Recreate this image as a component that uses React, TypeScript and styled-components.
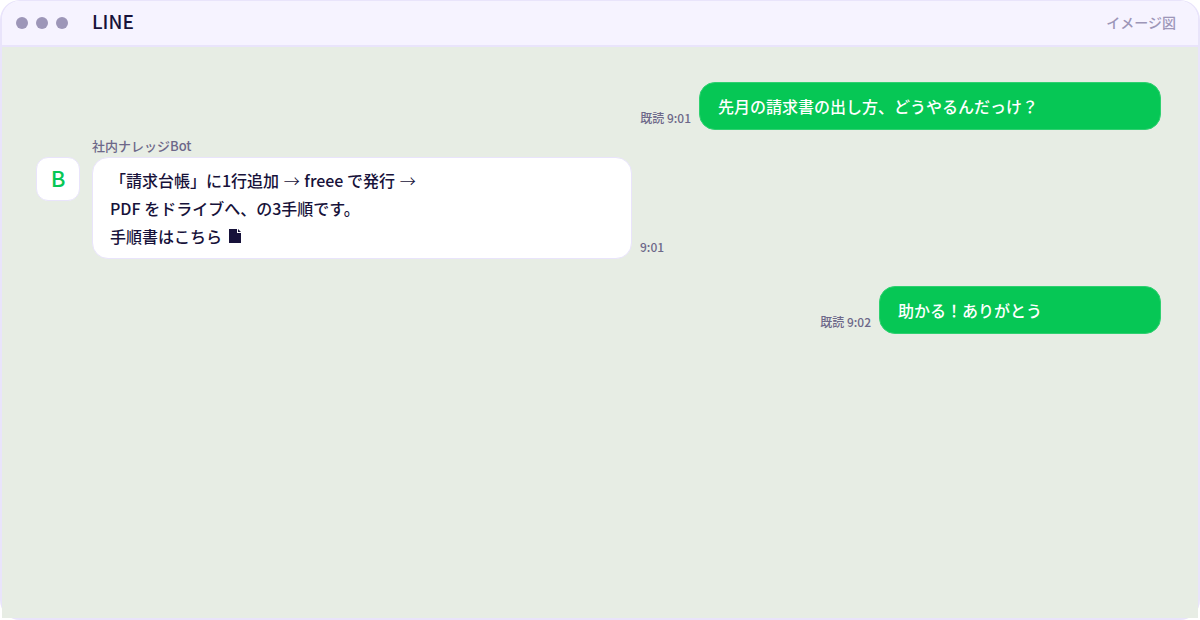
import React from "react";
import styled, { createGlobalStyle } from "styled-components";

const color = {
  line: "#e9e4fb",
  bar: "#f6f3ff",
  ink: "#17123a",
  muted: "#6d6889",
  faint: "#9d96b8",
  chat: "#e7ede4",
  green: "#06c755",
};

const GlobalStyle = createGlobalStyle`
  * { box-sizing: border-box; }
  body {
    margin: 0;
    background: #ffffff;
    color: ${color.ink};
    font-family: "Noto Sans CJK JP", "Noto Sans", sans-serif;
    font-weight: 500;
  }
`;

const Window = styled.main`
  display: flex;
  flex-direction: column;
  min-height: 100vh;
  border: 2px solid ${color.line};
  border-top-width: 1px;
  border-radius: 20px;
`;

const TitleBar = styled.header`
  display: flex;
  align-items: center;
  height: 46px;
  padding: 0 22px 0 14px;
  background: ${color.bar};
  border-bottom: 2px solid ${color.line};
  border-radius: 18px 18px 0 0;
`;

const Dots = styled.div`
  display: flex;
  gap: 8px;
`;

const Dot = styled.span`
  width: 12px;
  height: 12px;
  border-radius: 50%;
  background: ${color.faint};
`;

const Title = styled.h1`
  flex: 1;
  margin: 0 0 0 24px;
  padding-bottom: 4px;
  font-size: 19px;
  line-height: 28px;
  font-weight: 500;
`;

const Caption = styled.span`
  padding-bottom: 2px;
  color: ${color.faint};
  font-size: 14px;
  line-height: 20px;
`;

const Chat = styled.section`
  flex: 1;
  display: flex;
  flex-direction: column;
  padding: 35px 37px 35px 34px;
  background: ${color.chat};
`;

const Message = styled.article<{ $own?: boolean; $gap?: number }>`
  display: flex;
  align-items: flex-end;
  justify-content: ${(p) => (p.$own ? "flex-end" : "flex-start")};
  gap: 8px;
  margin-top: ${(p) => p.$gap ?? 0}px;
`;

const Avatar = styled.div`
  display: flex;
  align-items: center;
  justify-content: center;
  align-self: flex-start;
  flex: none;
  width: 44px;
  height: 44px;
  margin: 20px 4px 0 0;
  padding-bottom: 4px;
  border: 1px solid ${color.line};
  border-radius: 12px;
  background: #ffffff;
  color: ${color.green};
  font-size: 22px;
  line-height: 28px;
`;

const Body = styled.div<{ $width: number }>`
  flex: 0 1 ${(p) => p.$width}px;
  min-width: 0;
`;

const Sender = styled.div`
  padding-bottom: 2px;
  color: ${color.muted};
  font-size: 13px;
  line-height: 18px;
`;

const Bubble = styled.p<{ $own?: boolean }>`
  margin: 0;
  padding: ${(p) => (p.$own ? "9px 18px" : "8px 17px")};
  border: 1px solid ${(p) => (p.$own ? "#2fd070" : color.line)};
  border-radius: 16px;
  background: ${(p) => (p.$own ? color.green : "#ffffff")};
  color: ${(p) => (p.$own ? "#ffffff" : color.ink)};
  font-size: 16px;
  line-height: 28px;
`;

const Arrow = styled.span`
  margin: 0 1px;
  font-weight: 300;
`;

const Stamp = styled.time`
  flex: none;
  color: ${color.muted};
  font-size: 12px;
  line-height: 24px;
`;

const DocIcon = styled.svg`
  width: 12px;
  height: 14px;
  margin-left: 3px;
`;

export default function App() {
  return (
    <>
      <GlobalStyle />
      <Window>
        <TitleBar>
          <Dots>
            <Dot />
            <Dot />
            <Dot />
          </Dots>
          <Title>LINE</Title>
          <Caption>イメージ図</Caption>
        </TitleBar>
        <Chat>
          <Message $own>
            <Stamp>既読 9:01</Stamp>
            <Body $width={462}>
              <Bubble $own>先月の請求書の出し方、どうやるんだっけ？</Bubble>
            </Body>
          </Message>
          <Message $gap={7}>
            <Avatar>B</Avatar>
            <Body $width={540}>
              <Sender>社内ナレッジBot</Sender>
              <Bubble>
                「請求台帳」に1行追加 <Arrow>→</Arrow> freee で発行 <Arrow>→</Arrow>
                <br />
                PDF をドライブへ、の3手順です。
                <br />
                手順書はこちら{" "}
                <DocIcon viewBox="0 0 12 14" role="img" aria-label="手順書">
                  <path d="M0 0H8V4H12V14H0Z M9 0L12 3H9Z" fill="currentColor" />
                </DocIcon>
              </Bubble>
            </Body>
            <Stamp>9:01</Stamp>
          </Message>
          <Message $own $gap={27}>
            <Stamp>既読 9:02</Stamp>
            <Body $width={282}>
              <Bubble $own>助かる！ありがとう</Bubble>
            </Body>
          </Message>
        </Chat>
      </Window>
    </>
  );
}
